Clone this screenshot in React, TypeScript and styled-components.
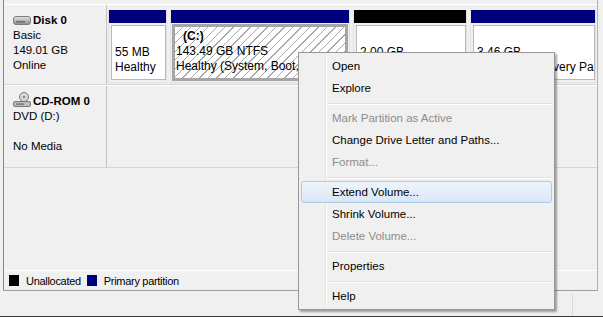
import styled, { createGlobalStyle } from "styled-components";

const GlobalStyle = createGlobalStyle`
  html, body { margin: 0; padding: 0; background: #f0f0f0; }
  body {
    font-family: "Segoe UI", "Liberation Sans", Arial, sans-serif;
    font-size: 12px;
    color: #000;
  }
`;

const Window = styled.div`
  position: relative;
  width: 603px;
  height: 317px;
  overflow: hidden;
  display: flex;
  flex-direction: column;
  background: #f0f0f0;
`;

const Pane = styled.div`
  height: 291px;
  box-sizing: border-box;
  margin: 0 5px 0 3px;
  border-left: 1px solid #828790;
  border-right: 1px solid #b4b4b4;
  border-bottom: 1px solid #a0a0a0;
  display: flex;
  flex-direction: column;
`;

const Rows = styled.div`
  flex: 1;
  padding-top: 4px;
  display: flex;
  flex-direction: column;
`;

const Row = styled.div<{ $h: number }>`
  display: flex;
  height: ${(p) => p.$h}px;
  border-top: 1px solid #fff;
  border-bottom: 1px solid #d5d5d5;
`;

const Label = styled.div`
  width: 103px;
  box-sizing: border-box;
  padding: 8px 0 0 9px;
  border-right: 1px solid #c3c3c3;
  font-size: 11.5px;
  line-height: 15px;
`;

const Title = styled.div`
  height: 15px;
  display: flex;
  align-items: center;
  font-weight: bold;
  svg { margin-right: 1px; flex: none; }
`;

const Line = styled.div<{ $indent?: number; $bold?: boolean }>`
  height: 15px;
  padding-left: ${(p) => p.$indent ?? 0}px;
  font-weight: ${(p) => (p.$bold ? "bold" : "normal")};
  white-space: nowrap;
`;

const Partitions = styled.div`
  flex: 1;
  display: flex;
  gap: 3px;
  padding: 5px 0 0 1px;
`;

const Partition = styled.div<{ $w: number }>`
  width: ${(p) => p.$w}px;
  height: 73px;
  display: flex;
  flex-direction: column;
  border: 1px solid #e2e2e2;
  border-top: none;
  box-sizing: border-box;
`;

const Bar = styled.div<{ $color: string }>`
  height: 13px;
  flex: none;
  background: ${(p) => p.$color};
`;

const Body = styled.div<{ $selected?: boolean }>`
  flex: 1;
  display: flex;
  padding: ${(p) => (p.$selected ? "1px 1px 1px 1px" : "2px 0 2px 2px")};
`;

const Box = styled.div<{ $selected?: boolean }>`
  flex: 1;
  overflow: hidden;
  padding: ${(p) => (p.$selected ? "2px 0 0 1px" : "4px 0 0 3px")};
  box-sizing: border-box;
  background: ${(p) =>
    p.$selected
      ? "repeating-linear-gradient(135deg, #fff 0 5px, #a9a9a9 5px 6px)"
      : "#fff"};
  border: ${(p) => (p.$selected ? "3px solid #a5a5a5" : "1px solid #b9b9b9")};
  line-height: 15px;
`;

const Legend = styled.div`
  height: 19px;
  border-top: 1px solid #fff;
  display: flex;
  align-items: center;
  padding-left: 5px;
  gap: 6px;
  font-size: 11px;
  letter-spacing: -0.3px;
`;

const Swatch = styled.span<{ $color: string }>`
  width: 10px;
  height: 11px;
  background: ${(p) => p.$color};
  margin-right: 1px;
`;

const StatusBar = styled.div`
  flex: 1;
  display: flex;
  justify-content: flex-end;
  border-bottom: 1px solid #3a3a3a;
`;

const Grip = styled.div`
  width: 30px;
  margin-top: 3px;
  border-left: 1px solid #dadada;
`;

const Menu = styled.div`
  position: absolute;
  left: 298px;
  top: 52px;
  width: 257px;
  box-sizing: border-box;
  padding: 2px;
  background: #f0f0f0;
  border: 1px solid #979797;
  box-shadow: 2px 2px 2px rgba(0, 0, 0, 0.35);
  font-size: 11.5px;
  &::before {
    content: "";
    position: absolute;
    left: 26px;
    top: 2px;
    bottom: 2px;
    width: 1px;
    background: #e2e3e3;
    box-shadow: 1px 0 0 #fff;
  }
`;

const Item = styled.div<{ $disabled?: boolean; $hot?: boolean }>`
  position: relative;
  height: 22px;
  box-sizing: border-box;
  display: flex;
  align-items: center;
  padding-left: 30px;
  border-radius: 3px;
  color: ${(p) => (p.$disabled ? "#8d8d8d" : "#000")};
  border: 1px solid ${(p) => (p.$hot ? "#aecbe8" : "transparent")};
  background: ${(p) =>
    p.$hot ? "linear-gradient(#eef5fc, #d9e7f5)" : "transparent"};
`;

const Separator = styled.div`
  height: 8px;
  display: flex;
  align-items: center;
  padding-left: 27px;
  &::after {
    content: "";
    flex: 1;
    height: 1px;
    background: #e0e0e0;
    box-shadow: 0 1px 0 #fff;
  }
`;

const DiskIcon = () => (
  <svg width="19" height="11" viewBox="0 0 19 11">
    <defs>
      <linearGradient id="dk" x1="0" y1="0" x2="0" y2="1">
        <stop offset="0" stopColor="#e4e4e4" />
        <stop offset="0.5" stopColor="#b9b9b9" />
        <stop offset="1" stopColor="#8a8a8a" />
      </linearGradient>
    </defs>
    <rect x="0.5" y="1.5" width="17" height="8" rx="2.5" fill="url(#dk)" stroke="#7d7d7d" />
    <rect x="3" y="6" width="9" height="1.5" fill="#6e6e6e" />
  </svg>
);

const CdIcon = () => (
  <svg width="19" height="16" viewBox="0 0 19 16" style={{ marginTop: -3 }}>
    <rect x="0.5" y="9.5" width="17" height="5" rx="1.5" fill="#bdbdbd" stroke="#7a7a7a" />
    <rect x="3" y="11.5" width="8" height="1.2" fill="#6a6a6a" />
    <circle cx="11" cy="5" r="4.5" fill="#d8d8d8" stroke="#7a7a7a" />
    <circle cx="11" cy="5" r="1.3" fill="#8f8f8f" />
  </svg>
);

const menu: Array<{ t?: string; d?: boolean; h?: boolean } | "sep"> = [
  { t: "Open" },
  { t: "Explore" },
  "sep",
  { t: "Mark Partition as Active", d: true },
  { t: "Change Drive Letter and Paths..." },
  { t: "Format...", d: true },
  "sep",
  { t: "Extend Volume...", h: true },
  { t: "Shrink Volume..." },
  { t: "Delete Volume...", d: true },
  "sep",
  { t: "Properties" },
  "sep",
  { t: "Help" },
];

export default function App() {
  return (
    <Window>
      <GlobalStyle />
      <Pane>
        <Rows>
          <Row $h={79}>
            <Label>
              <Title>
                <DiskIcon />
                Disk 0
              </Title>
              <Line>Basic</Line>
              <Line>149.01 GB</Line>
              <Line>Online</Line>
            </Label>
            <Partitions>
              <Partition $w={59}>
                <Bar $color="#00007c" />
                <Body>
                  <Box>
                    <Line />
                    <Line>55 MB</Line>
                    <Line>Healthy</Line>
                  </Box>
                </Body>
              </Partition>
              <Partition $w={180}>
                <Bar $color="#00007c" />
                <Body $selected>
                  <Box $selected>
                    <Line $bold $indent={7}>(C:)</Line>
                    <Line>143.49 GB NTFS</Line>
                    <Line>Healthy (System, Boot, Page File, Active, Crash Dump, Primary Partition)</Line>
                  </Box>
                </Body>
              </Partition>
              <Partition $w={114}>
                <Bar $color="#000" />
                <Body>
                  <Box>
                    <Line />
                    <Line>2.00 GB</Line>
                    <Line>Unallocated</Line>
                  </Box>
                </Body>
              </Partition>
              <Partition $w={126}>
                <Bar $color="#00007c" />
                <Body>
                  <Box>
                    <Line />
                    <Line>3.46 GB</Line>
                    <Line>Healthy (Recovery Partition)</Line>
                  </Box>
                </Body>
              </Partition>
            </Partitions>
          </Row>
          <Row $h={81}>
            <Label>
              <Title>
                <CdIcon />
                CD-ROM 0
              </Title>
              <Line>DVD (D:)</Line>
              <Line />
              <Line>No Media</Line>
            </Label>
          </Row>
        </Rows>
        <Legend>
          <Swatch $color="#000" />
          <span>Unallocated</span>
          <Swatch $color="#00007c" />
          <span>Primary partition</span>
        </Legend>
      </Pane>
      <StatusBar>
        <Grip />
      </StatusBar>
      <Menu>
        {menu.map((m, i) =>
          m === "sep" ? (
            <Separator key={i} />
          ) : (
            <Item key={i} $disabled={m.d} $hot={m.h}>
              {m.t}
            </Item>
          )
        )}
      </Menu>
    </Window>
  );
}
